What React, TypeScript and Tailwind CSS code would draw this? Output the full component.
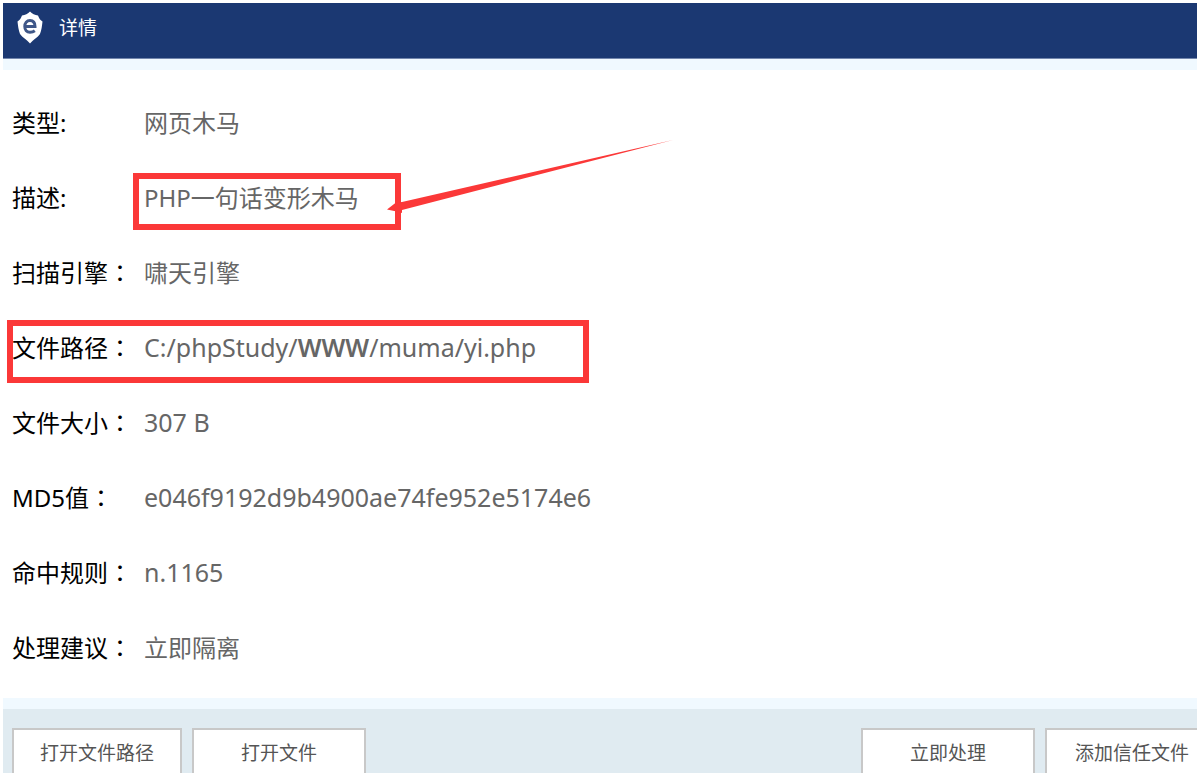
import clsx from "clsx";

type Row = {
  label: string;
  colon: string;
  value: string;
  latin?: boolean;
  boldPart?: string;
  mark?: "value" | "row";
};

const rows: Row[] = [
  { label: "类型", colon: ":", value: "网页木马" },
  { label: "描述", colon: ":", value: "PHP一句话变形木马", mark: "value" },
  { label: "扫描引擎", colon: "：", value: "啸天引擎" },
  {
    label: "文件路径",
    colon: "：",
    value: "C:/phpStudy/WWW/muma/yi.php",
    latin: true,
    boldPart: "WWW",
    mark: "row",
  },
  { label: "文件大小", colon: "：", value: "307 B", latin: true },
  { label: "MD5值", colon: "：", value: "e046f9192d9b4900ae74fe952e5174e6", latin: true },
  { label: "命中规则", colon: "：", value: "n.1165", latin: true },
  { label: "处理建议", colon: "：", value: "立即隔离" },
];

function ShieldLogo() {
  return (
    <svg viewBox="0 0 26 33" className="h-[33px] w-[26px]" aria-hidden="true">
      <path
        d="M13 0.5C15 3 18 4 21 4.500C22 7 23 9 25.500 10.500C25 15 24.500 19 23 23C20.500 26.500 16.500 28.500 13 32.500C9.500 28.500 5.500 26.500 3 23C1.500 19 1 15 0.500 10.500C3 9 4 7 5 4.500C8 4 11 3 13 0.500Z"
        fill="#fff"
      />
      <path
        d="M7.800 15.500H18C18 11.500 16 9.500 13 9.500C9.800 9.500 7.800 12 7.800 15.500C7.800 19 9.800 21.300 13 21.300C15 21.300 16.500 20.800 17.800 19.800"
        fill="none"
        stroke="#3f5788"
        strokeWidth="3"
      />
    </svg>
  );
}

function Arrow() {
  return (
    <svg
      viewBox="0 0 288 75"
      className="absolute -top-5 left-[387px] h-[75px] w-[288px]"
      aria-hidden="true"
    >
      <path d="M0 69.500L9 62.500L15 62L286 0L150 35L15 70L15 73L12 72Z" fill="#fb3838" />
    </svg>
  );
}

function Value({ row }: { row: Row }) {
  if (!row.boldPart) return <>{row.value}</>;
  const [before, after] = row.value.split(row.boldPart);
  return (
    <>
      {before}
      <span className="font-semibold">{row.boldPart}</span>
      {after}
    </>
  );
}

function DetailRow({ row }: { row: Row }) {
  return (
    <div className="relative flex h-[75px] items-center pl-3 text-2xl">
      <dt className="w-[132px] shrink-0 text-black">
        {row.label}
        <span className={clsx(row.colon === "：" && "font-['Noto_Sans_CJK_TC',sans-serif]")}>
          {row.colon}
        </span>
      </dt>
      <dd className={clsx("text-[#666]", row.latin && "text-[25px]")}>
        <Value row={row} />
      </dd>
      {row.mark === "value" && (
        <>
          <span className="absolute top-[13px] left-[133px] h-[57px] w-[268px] border-6 border-[#fb3838]" />
          <Arrow />
        </>
      )}
      {row.mark === "row" && (
        <span className="absolute top-[10px] left-[7px] h-[63px] w-[582px] border-6 border-[#fb3838]" />
      )}
    </div>
  );
}

function ActionButton({ text, className }: { text: string; className?: string }) {
  return (
    <button
      type="button"
      className={clsx(
        "h-[50px] border-2 border-[#c8c8c8] bg-white text-[19px] text-[#555]",
        className ?? "w-[174px]"
      )}
    >
      {text}
    </button>
  );
}

export default function App() {
  return (
    <div className="h-screen overflow-hidden bg-white pt-[3px] font-['Noto_Sans','Noto_Sans_CJK_SC',sans-serif]">
      <header className="ml-[3px] flex h-14 items-center gap-4 border-b border-[#7386ad] bg-[#1b3872] pb-[6px] pl-[14px] text-white">
        <ShieldLogo />
        <h1 className="pt-[2px] text-[19px]">详情</h1>
      </header>
      <div className="ml-[3px] h-[11px] bg-[#f0f9ff]" />
      <dl className="pt-[15px] pb-[13px]">
        {rows.map((row) => (
          <DetailRow key={row.label} row={row} />
        ))}
      </dl>
      <div className="ml-[3px] h-[11px] bg-[#f0f9ff]" />
      <footer className="ml-[3px] flex justify-between bg-[#e0ebf1] py-[19px] pl-[9px]">
        <div className="flex gap-[10px]">
          <ActionButton text="打开文件路径" className="w-[170px]" />
          <ActionButton text="打开文件" />
        </div>
        <div className="-mr-[22px] flex gap-[10px]">
          <ActionButton text="立即处理" />
          <ActionButton text="添加信任文件" />
        </div>
      </footer>
    </div>
  );
}
